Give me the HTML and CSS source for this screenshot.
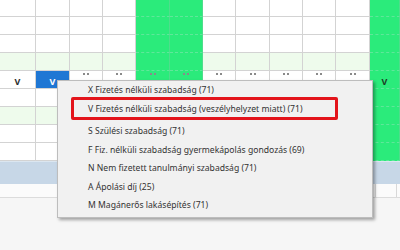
FILE: index.html
```html
<!DOCTYPE html>
<html>
<head>
<meta charset="utf-8">
<link rel="stylesheet" href="styles.css">
</head>
<body>
<div class="screen">
  <div class="grid">
    <!-- row 0 -->
    <div class="c"></div><div class="c"></div><div class="c"></div><div class="c"></div><div class="c g"></div><div class="c g"></div><div class="c"></div><div class="c"></div><div class="c"></div><div class="c"></div><div class="c"></div><div class="c g"></div>
    <!-- row 1 -->
    <div class="c"></div><div class="c"></div><div class="c"></div><div class="c"></div><div class="c g"></div><div class="c g"></div><div class="c"></div><div class="c"></div><div class="c"></div><div class="c"></div><div class="c"></div><div class="c g"></div>
    <!-- row 2 -->
    <div class="c"></div><div class="c"></div><div class="c"></div><div class="c"></div><div class="c g"></div><div class="c g"></div><div class="c"></div><div class="c"></div><div class="c"></div><div class="c"></div><div class="c"></div><div class="c g"></div>
    <!-- row 3 -->
    <div class="c lg"></div><div class="c lg"></div><div class="c lg"></div><div class="c lg"></div><div class="c g"></div><div class="c g"></div><div class="c lg"></div><div class="c lg"></div><div class="c lg"></div><div class="c lg"></div><div class="c lg"></div><div class="c g"></div>
    <!-- row 4 -->
    <div class="c t"><span class="v">V</span></div><div class="c t sel"><span class="v">V</span></div><div class="c d"><i class="dots"></i></div><div class="c d"><i class="dots"></i></div><div class="c g d"><i class="dots"></i></div><div class="c g d"><i class="dots"></i></div><div class="c d"><i class="dots"></i></div><div class="c d"><i class="dots"></i></div><div class="c d"><i class="dots"></i></div><div class="c d"><i class="dots"></i></div><div class="c d"><i class="dots"></i></div><div class="c g t"><span class="v">V</span></div>
    <!-- row 5 -->
    <div class="c"></div><div class="c"></div><div class="c"></div><div class="c"></div><div class="c g"></div><div class="c g"></div><div class="c"></div><div class="c"></div><div class="c"></div><div class="c"></div><div class="c"></div><div class="c g"></div>
    <!-- row 6 -->
    <div class="c lg"></div><div class="c lg"></div><div class="c lg"></div><div class="c lg"></div><div class="c g"></div><div class="c g"></div><div class="c lg"></div><div class="c lg"></div><div class="c lg"></div><div class="c lg"></div><div class="c lg"></div><div class="c g"></div>
    <!-- row 7 -->
    <div class="c"></div><div class="c"></div><div class="c"></div><div class="c"></div><div class="c g"></div><div class="c g"></div><div class="c"></div><div class="c"></div><div class="c"></div><div class="c"></div><div class="c"></div><div class="c g"></div>
    <!-- row 8 -->
    <div class="c"></div><div class="c"></div><div class="c"></div><div class="c"></div><div class="c g"></div><div class="c g"></div><div class="c"></div><div class="c"></div><div class="c"></div><div class="c"></div><div class="c"></div><div class="c g"></div>
  </div>
  <div class="band"></div>
  <div class="scrollrow"><div class="sr-main"></div><div class="sr-btn"></div></div>
  <div class="rest"></div>

  <div class="menu">
    <div class="item">X Fizetés nélküli szabadság (71)</div>
    <div class="item">V Fizetés nélküli szabadság (veszélyhelyzet miatt) (71)</div>
    <div class="item gapped">S Szülési szabadság (71)</div>
    <div class="item">F Fiz. nélküli szabadság gyermekápolás gondozás (69)</div>
    <div class="item">N Nem fizetett tanulmányi szabadság (71)</div>
    <div class="item">A Ápolási díj (25)</div>
    <div class="item">M Magánerős lakásépítés (71)</div>
    <div class="redbox"></div>
  </div>
</div>
</body>
</html>
```

FILE: styles.css
```css
* { box-sizing: border-box; margin: 0; padding: 0; }
html, body { width: 400px; height: 250px; overflow: hidden; background: #f6f6f6; }
.screen { position: relative; width: 400px; height: 250px; font-family: "Noto Sans", "Open Sans", sans-serif; }

.grid {
  display: grid;
  grid-template-columns: 36px 34px 33px 33px 34px 33px 33px 34px 33px 33px 34px 1fr;
  grid-template-rows: 17px repeat(8, 18px);
  background: #fff;
}
.c {
  border-right: 1px solid #d3d3d3;
  border-bottom: 1px solid #d3d3d3;
  background: #fff;
  display: flex;
  justify-content: center;
  align-items: center;
}
.lg { background: #eefbec; }
.g { background: #2beb7b; border-bottom: 1px dashed #5fe79a; border-right-color: #4fdd8c; }
.sel { background: #1f77d4; }
.t .v { font-size: 9px; font-weight: 700; color: #2a2a2a; line-height: 1; margin-top: 3px; }
.sel .v { color: #fff; }
.g.t .v { color: #1d3a25; }
.d { align-items: flex-start; }
.dots {
  display: block;
  width: 2px; height: 2px;
  background: #8a8a8a;
  box-shadow: 4px 0 #8a8a8a;
  margin-top: 2px;
  margin-right: 4px;
}

.band { height: 23px; background: #c7d7e7; border-top: 1px solid #dbe6f0; }
.scrollrow { height: 14px; display: flex; background: #fbfbfb; border-bottom: 1px solid #dcdcdc; }
.sr-main { flex: 1; }
.sr-btn { width: 22px; border-left: 1px solid #d8d8d8; border-right: 1px solid #d8d8d8; margin-right: 3px; }
.rest { height: 52px; background: #f6f6f6; }

.menu {
  position: absolute;
  left: 57px; top: 80px;
  width: 316px; height: 138px;
  background: #f1f1f1;
  border: 1px solid #bdbdbd;
  box-shadow: 2px 2px 3px rgba(0,0,0,0.35);
  padding-left: 30px;
}
.item {
  height: 19px;
  line-height: 19px;
  font-size: 8.6px;
  color: #333;
  white-space: nowrap;
}
.item.gapped { margin-top: 3px; }
.item.gapped, .item.gapped ~ .item { height: 18.6px; line-height: 18.6px; }
.redbox {
  position: absolute;
  left: 13px; top: 16px;
  width: 267px; height: 23px;
  border: 3px solid #e3141b;
  border-radius: 2px;
}
```
